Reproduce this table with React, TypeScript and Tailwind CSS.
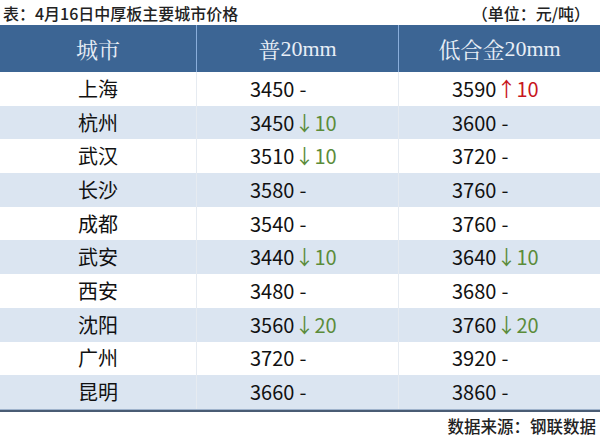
const rows: [string, string, string, string, string][] = [
  ["上海", "3450", "-", "3590", "↑10"],
  ["杭州", "3450", "↓10", "3600", "-"],
  ["武汉", "3510", "↓10", "3720", "-"],
  ["长沙", "3580", "-", "3760", "-"],
  ["成都", "3540", "-", "3760", "-"],
  ["武安", "3440", "↓10", "3640", "↓10"],
  ["西安", "3480", "-", "3680", "-"],
  ["沈阳", "3560", "↓20", "3760", "↓20"],
  ["广州", "3720", "-", "3920", "-"],
  ["昆明", "3660", "-", "3860", "-"],
];

function Change({ value }: { value: string }) {
  if (value === "-") return <span className="ml-[5px]">-</span>;
  const up = value.startsWith("↑");
  return (
    <span className={up ? "text-[#c8161d]" : "text-[#5b8c3a]"}>{value}</span>
  );
}

export default function App() {
  return (
    <div className="w-[600px] h-[437px] bg-white font-['Noto_Sans_CJK_SC',sans-serif] text-[#111]">
      <div className="flex h-[25px] items-center justify-between pl-[3px] pr-[10px] text-[16px] font-medium text-[#222]">
        <span>表：4月16日中厚板主要城市价格</span>
        <span>（单位：元/吨）</span>
      </div>
      <div className="grid h-[47px] grid-cols-[196px_1px_201px_1px_201px] bg-[#3c6594] font-['Noto_Serif_CJK_SC','Liberation_Serif',serif] text-[22px] text-[#e8eef6]">
        <div className="flex items-center justify-center">城市</div>
        <div className="bg-[#8aaedb]" />
        <div className="flex items-center justify-center">
          普<span className="font-['Liberation_Serif',serif]">20mm</span>
        </div>
        <div className="bg-[#8aaedb]" />
        <div className="flex items-center justify-center">
          低合金<span className="font-['Liberation_Serif',serif]">20mm</span>
        </div>
      </div>
      {rows.map(([city, p1, c1, p2, c2], i) => (
        <div
          key={city}
          className={`grid h-[33.7px] grid-cols-[196px_1px_201px_1px_201px] text-[20px] leading-none ${
            i % 2 === 1 ? "bg-[#dbe5f1]" : "bg-white"
          }`}
        >
          <div className="flex items-center justify-center">{city}</div>
          <div className="bg-[#e6ebf1]" />
          <div className="flex items-center pl-[53px]">
            {p1}
            <Change value={c1} />
          </div>
          <div className="bg-[#e6ebf1]" />
          <div className="flex items-center pl-[53px]">
            {p2}
            <Change value={c2} />
          </div>
        </div>
      ))}
      <div className="h-[3px] border-t border-[#9fb3cc] bg-[#4a5c74]" />
      <div className="flex justify-end pr-[4px] pt-[2px] text-[16.5px] font-medium text-[#222]">
        数据来源：钢联数据
      </div>
    </div>
  );
}
